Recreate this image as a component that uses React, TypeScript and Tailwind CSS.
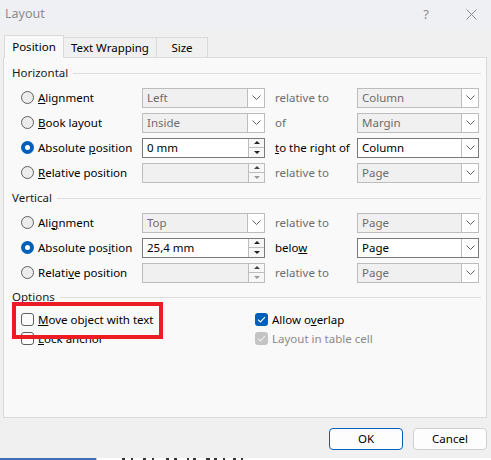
import React from "react";

function Radio({ checked }: { checked?: boolean }) {
  if (checked) {
    return (
      <span className="w-[13px] h-[13px] rounded-full bg-[#005fb8] flex items-center justify-center shrink-0">
        <span className="w-[5px] h-[5px] rounded-full bg-white" />
      </span>
    );
  }
  return <span className="w-[13px] h-[13px] rounded-full border border-[#5f5f5f] bg-[#ececec] shrink-0" />;
}

function Check({ state }: { state: "off" | "on" | "disabled" }) {
  if (state === "off") {
    return <span className="w-[13px] h-[13px] rounded-[3px] border border-[#5f5f5f] bg-[#fbfbfb] shrink-0" />;
  }
  const bg = state === "on" ? "bg-[#005fb8]" : "bg-[#c4c4c4]";
  const stroke = state === "on" ? "#ffffff" : "#ececec";
  return (
    <span className={`w-[13px] h-[13px] rounded-[3px] ${bg} flex items-center justify-center shrink-0`}>
      <svg width="9" height="7" viewBox="0 0 9 7">
        <path d="M1 3.6 L3.4 6 L8 1.2" stroke={stroke} strokeWidth="1.1" fill="none" />
      </svg>
    </span>
  );
}

function Chevron() {
  return (
    <svg width="9" height="5" viewBox="0 0 9 5">
      <path d="M0.5 0.5 L4.5 4.5 L8.5 0.5" stroke="#5f5f5f" strokeWidth="1" fill="none" />
    </svg>
  );
}

function Dropdown({ value, enabled, w }: { value: string; enabled?: boolean; w: string }) {
  return (
    <div
      className={`${w} h-[20px] flex items-stretch border ${
        enabled ? "border-[#7a7a7a] bg-white text-[#000]" : "border-[#bdbdbd] bg-[#f0f0f0] text-[#6d6d6d]"
      }`}
    >
      <span className="flex-1 flex items-center pl-[4px] leading-none">{value}</span>
      <span className="w-[17px] flex items-center justify-center bg-white border-l border-[#bdbdbd]">
        <Chevron />
      </span>
    </div>
  );
}

function Tri({ up, color }: { up?: boolean; color: string }) {
  return (
    <svg width="6" height="3" viewBox="0 0 6 3">
      <path d={up ? "M0 3 L3 0 L6 3 Z" : "M0 0 L3 3 L6 0 Z"} fill={color} />
    </svg>
  );
}

function Spinner({ value, enabled }: { value: string; enabled?: boolean }) {
  return (
    <div
      className={`w-[123px] h-[20px] flex items-stretch border ${
        enabled ? "border-[#7a7a7a] bg-white" : "border-[#bdbdbd] bg-[#f0f0f0]"
      }`}
    >
      <span className="flex-1 flex items-center pl-[4px] leading-none text-black">{value}</span>
      <span className="w-[16px] flex flex-col border-l border-[#bdbdbd] bg-[#f7f7f7]">
        <span className="flex-1 flex items-center justify-center border-b border-[#bdbdbd]">
          <Tri up color={enabled ? "#222" : "#444"} />
        </span>
        <span className="flex-1 flex items-center justify-center">
          <Tri color={enabled ? "#222" : "#9a9a9a"} />
        </span>
      </span>
    </div>
  );
}

function Header({ children }: { children: React.ReactNode }) {
  return (
    <div className="flex items-center h-[18px] pl-[8px] pr-[5px]">
      <span className="text-[#1a1a1a] leading-none">{children}</span>
      <div className="flex-1 h-px bg-[#dedede] ml-[5px]" />
    </div>
  );
}

function Row({
  checked,
  label,
  field,
  rel,
  relEnabled,
  right,
}: {
  checked?: boolean;
  label: React.ReactNode;
  field: React.ReactNode;
  rel: React.ReactNode;
  relEnabled?: boolean;
  right: React.ReactNode;
}) {
  return (
    <div className="flex items-center h-[25px] pl-[17px]">
      <div className="w-[121px] flex items-center gap-[4px]">
        <Radio checked={checked} />
        <span className="leading-none text-black">{label}</span>
      </div>
      {field}
      <span className={`w-[92px] pl-[10px] leading-none ${relEnabled ? "text-black" : "text-[#6d6d6d]"}`}>{rel}</span>
      {right}
    </div>
  );
}

export default function App() {
  return (
    <div className="w-[491px] h-[460px] bg-[#f0f0f0] relative overflow-hidden flex flex-col font-['Noto_Sans',sans-serif] text-[11.5px]">
      {/* Title bar */}
      <div className="h-[28px] bg-[#eef0f4] flex items-center shrink-0">
        <span className="pl-[5px] text-[12.5px] text-[#8c8c8c] leading-none">Layout</span>
        <span className="ml-auto text-[13px] text-[#8c8c8c] leading-none mr-[37px]">?</span>
        <svg width="11" height="11" viewBox="0 0 11 11" className="mr-[14px]">
          <path d="M0.5 0.5 L10.5 10.5 M10.5 0.5 L0.5 10.5" stroke="#8a8a8a" strokeWidth="1" />
        </svg>
      </div>

      {/* Tabs */}
      <div className="flex items-end pt-[7px] pl-[4px] shrink-0">
        <div className="w-[60px] h-[23px] -mb-px relative z-10 bg-[#f9f9f9] border border-b-0 border-[#dadada] flex items-center justify-center text-black">
          Position
        </div>
        <div className="w-[93px] h-[20px] bg-[#f0f0f0] border border-l-0 border-b-0 border-[#dadada] flex items-center justify-center text-black">
          Text Wrapping
        </div>
        <div className="w-[51px] h-[20px] bg-[#f0f0f0] border border-l-0 border-b-0 border-[#dadada] flex items-center justify-center text-black">
          Size
        </div>
      </div>

      {/* Panel */}
      <div className="ml-[3px] w-[484px] h-[361px] bg-[#f9f9f9] border border-[#dadada] pt-[6px] shrink-0">
        <Header>Horizontal</Header>
        <div className="mt-[3px]">
          <Row
            label={<><u>A</u>lignment</>}
            field={<Dropdown w="w-[123px]" value="Left" />}
            rel="relative to"
            right={<Dropdown w="w-[122px]" value="Column" />}
          />
          <Row
            label={<><u>B</u>ook layout</>}
            field={<Dropdown w="w-[123px]" value="Inside" />}
            rel="of"
            right={<Dropdown w="w-[122px]" value="Margin" />}
          />
          <Row
            checked
            label={<>Absolute <u>p</u>osition</>}
            field={<Spinner value="0 mm" enabled />}
            rel={<><u>t</u>o the right of</>}
            relEnabled
            right={<Dropdown w="w-[122px]" value="Column" enabled />}
          />
          <Row
            label={<><u>R</u>elative position</>}
            field={<Spinner value="" />}
            rel="relative to"
            right={<Dropdown w="w-[122px]" value="Page" />}
          />
        </div>

        <div className="mt-[4px]">
          <Header>Vertical</Header>
        </div>
        <div className="mt-[3px]">
          <Row
            label={<>Ali<u>g</u>nment</>}
            field={<Dropdown w="w-[123px]" value="Top" />}
            rel="relative to"
            right={<Dropdown w="w-[122px]" value="Page" />}
          />
          <Row
            checked
            label={<>Absolute pos<u>i</u>tion</>}
            field={<Spinner value="25,4 mm" enabled />}
            rel={<>belo<u>w</u></>}
            relEnabled
            right={<Dropdown w="w-[122px]" value="Page" enabled />}
          />
          <Row
            label={<>Relati<u>v</u>e position</>}
            field={<Spinner value="" />}
            rel="relative to"
            right={<Dropdown w="w-[122px]" value="Page" />}
          />
        </div>

        <div className="mt-[3px]">
          <Header>Options</Header>
        </div>
        <div className="mt-[4px] flex pl-[17px]">
          <div className="w-[234px] flex flex-col">
            <div className="h-[19px] flex items-center gap-[4px]">
              <Check state="off" />
              <span className="leading-none text-black"><u>M</u>ove object with text</span>
            </div>
            <div className="h-[19px] flex items-center gap-[4px]">
              <Check state="off" />
              <span className="leading-none text-black"><u>L</u>ock anchor</span>
            </div>
          </div>
          <div className="flex flex-col">
            <div className="h-[19px] flex items-center gap-[4px]">
              <Check state="on" />
              <span className="leading-none text-black">Allow o<u>v</u>erlap</span>
            </div>
            <div className="h-[19px] flex items-center gap-[4px]">
              <Check state="disabled" />
              <span className="leading-none text-[#8a8a8a]">Layout in table cell</span>
            </div>
          </div>
        </div>
      </div>

      {/* Buttons */}
      <div className="flex justify-end gap-[10px] pr-[4px] mt-[10px] shrink-0">
        <button className="w-[74px] h-[22px] rounded-[4px] border border-[#005fb8] bg-[#fdfdfd] text-black leading-none">
          OK
        </button>
        <button className="w-[74px] h-[22px] rounded-[4px] border border-[#d0d0d0] bg-[#fdfdfd] text-black leading-none">
          Cancel
        </button>
      </div>

      <div className="flex-1" />
      {/* Document behind the dialog */}
      <div className="h-[2px] bg-white flex items-stretch shrink-0">
        <span className="w-[96px] bg-[#3f6fb5]" />
        <span className="w-px bg-[#c8c8c8]" />
        <span className="w-[25px]" />
        <span className="w-[3px] bg-[#333]" />
        <span className="w-[6px]" />
        <span className="w-[2px] bg-[#333]" />
        <span className="w-[10px]" />
        <span className="w-[3px] bg-[#333]" />
        <span className="w-[6px]" />
        <span className="w-[2px] bg-[#333]" />
        <span className="w-[12px]" />
        <span className="w-[3px] bg-[#333]" />
        <span className="w-[5px]" />
        <span className="w-[3px] bg-[#333]" />
        <span className="w-[10px]" />
        <span className="w-[2px] bg-[#333]" />
        <span className="w-[4px]" />
        <span className="w-[3px] bg-[#333]" />
        <span className="w-[10px]" />
        <span className="w-[4px] bg-[#333]" />
        <span className="w-[4px]" />
        <span className="w-[3px] bg-[#333]" />
        <span className="w-[6px]" />
        <span className="w-[2px] bg-[#333]" />
        <span className="w-[8px]" />
        <span className="w-[3px] bg-[#333]" />
        <span className="w-[5px]" />
        <span className="w-[2px] bg-[#333]" />
      </div>

      {/* Red highlight rectangle */}
      <div className="absolute left-[12px] top-[302px] w-[151px] h-[37px] border-[4px] border-[#ed1c24] pointer-events-none" />
    </div>
  );
}
